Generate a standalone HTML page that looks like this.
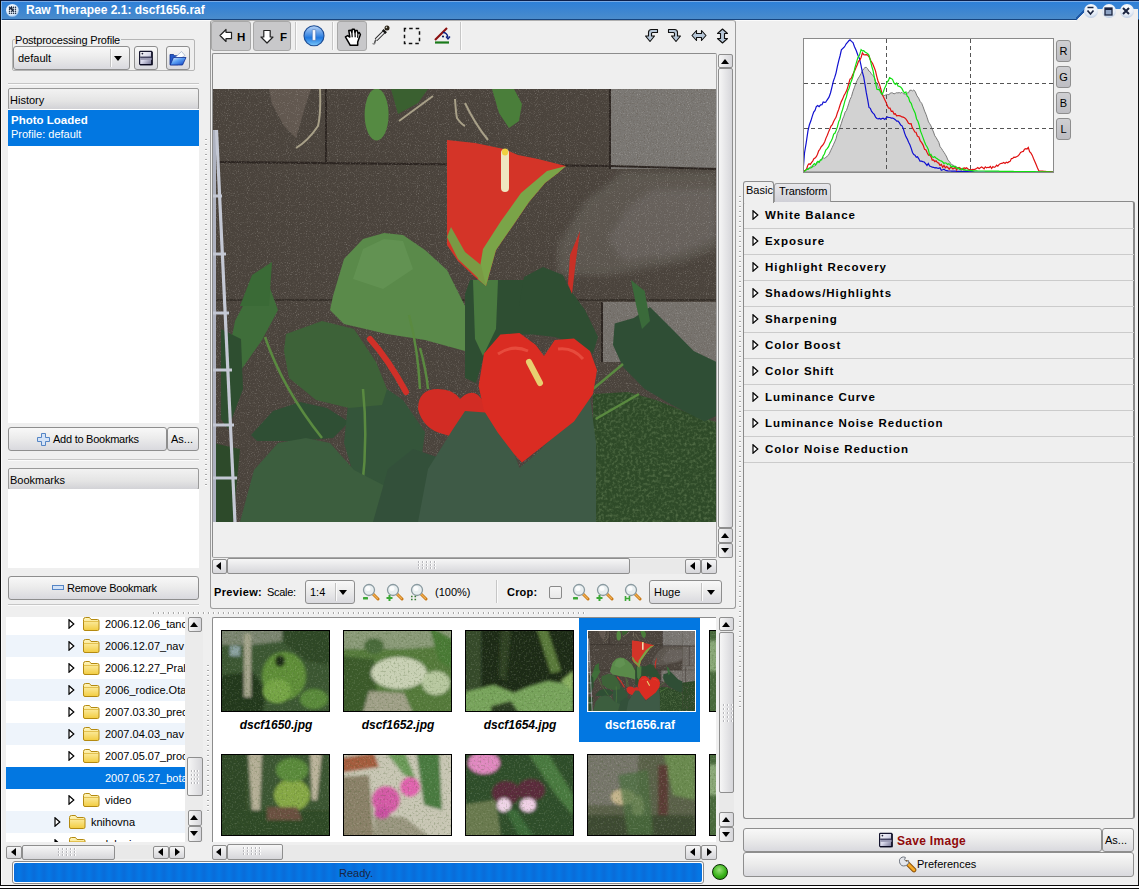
<!DOCTYPE html><html><head><meta charset="utf-8"><style>
*{box-sizing:border-box;margin:0;padding:0}
html,body{width:1139px;height:889px;overflow:hidden;background:#efefef;font-family:"Liberation Sans",sans-serif;font-size:11px;color:#000}
.a{position:absolute}
.t{position:absolute;white-space:nowrap;line-height:1}
.btn{position:absolute;border:1px solid #8e8e8e;border-radius:3px;background:linear-gradient(#f8f8f8,#ececec 45%,#d9d9de)}
.hdr{position:absolute;border:1px solid #9a9a9a;border-radius:2px;background:linear-gradient(#f2f2f2,#e4e4e4 60%,#d2d2d6)}
.sbv{position:absolute;border:1px solid #8e8e8e;border-radius:2px;background:linear-gradient(90deg,#f6f6f6,#e6e6e8 50%,#d6d6da)}
.sbh{position:absolute;border:1px solid #8e8e8e;border-radius:2px;background:linear-gradient(#f6f6f6,#e6e6e8 50%,#d6d6da)}
.trk{position:absolute;background:#e9e9e9}
.tu{position:absolute;width:0;height:0;border-left:5px solid transparent;border-right:5px solid transparent;border-bottom:5px solid #000}
.td{position:absolute;width:0;height:0;border-left:5px solid transparent;border-right:5px solid transparent;border-top:5px solid #000}
.tl{position:absolute;width:0;height:0;border-top:5px solid transparent;border-bottom:5px solid transparent;border-right:5px solid #000}
.tr{position:absolute;width:0;height:0;border-top:5px solid transparent;border-bottom:5px solid transparent;border-left:5px solid #000}
.sep{position:absolute;height:2px;border-top:1px solid #c6c6c6;border-bottom:1px solid #fbfbfb}
.vsep{position:absolute;width:2px;border-left:1px solid #c6c6c6;border-right:1px solid #fbfbfb}
.dotv{position:absolute;width:3px;background-image:linear-gradient(#a8a8a8,#a8a8a8);background-size:1px 1px;background-repeat:no-repeat}
.tool{position:absolute;left:744px;width:390px;height:26px;border-bottom:1px solid #cbcbcb}
.tool .t{left:21px;top:7px;font-weight:bold;font-size:11.5px;letter-spacing:0.95px}
.thumb{position:absolute;width:109px;height:82px;border:1px solid #000;overflow:hidden}
.lbl{position:absolute;font-weight:bold;font-style:italic;font-size:12px;white-space:nowrap;line-height:1;text-align:center;width:122px}
</style></head><body>
<div class="a" style="left:0;top:0;width:1px;height:889px;background:#111"></div><div class="a" style="left:1px;top:20px;width:1px;height:866px;background:#fafafa"></div>
<div class="a" style="left:1138px;top:0;width:1px;height:889px;background:#111"></div>
<div class="a" style="left:0;top:0;width:1139px;height:20px;background:linear-gradient(#0b1e4a 0,#0b1e4a 1px,#7aaae4 1px,#7aaae4 2px,#2e80d8 2px,#3a84d2 9px,#4a8ccc 19px,#17457f 19px,#17457f 20px)"></div>
<svg class="a" style="left:0;top:0" width="24" height="20" viewBox="0 0 24 20"><defs><radialGradient id="wic" cx=".45" cy=".4" r=".6"><stop offset="0" stop-color="#fff"/><stop offset=".7" stop-color="#e4f0fc"/><stop offset="1" stop-color="#9cc4ee"/></radialGradient></defs><path d="M1.5 1.5V20" stroke="#7ab0ec" stroke-width="1"/><circle cx="12.4" cy="10.4" r="6.4" fill="url(#wic)"/><circle cx="9.5" cy="7.3" r=".75" fill="#14243c"/><circle cx="9.5" cy="9.3" r=".75" fill="#14243c"/><circle cx="9.5" cy="11.3" r=".75" fill="#14243c"/><circle cx="9.5" cy="13.3" r=".75" fill="#14243c"/><circle cx="11.5" cy="7.3" r=".75" fill="#14243c"/><circle cx="11.5" cy="9.3" r=".75" fill="#14243c"/><circle cx="11.5" cy="11.3" r=".75" fill="#14243c"/><circle cx="11.5" cy="13.3" r=".75" fill="#14243c"/><circle cx="13.5" cy="7.3" r=".75" fill="#14243c"/><circle cx="13.5" cy="9.3" r=".75" fill="#14243c"/><circle cx="13.5" cy="11.3" r=".75" fill="#14243c"/><circle cx="13.5" cy="13.3" r=".75" fill="#14243c"/><circle cx="15.5" cy="7.3" r=".75" fill="#14243c"/><circle cx="15.5" cy="9.3" r=".75" fill="#14243c"/><circle cx="15.5" cy="11.3" r=".75" fill="#14243c"/><circle cx="15.5" cy="13.3" r=".75" fill="#14243c"/><path d="M9.5 9.3L11.5 7.3L12.5 10.5L13.5 11.3" stroke="#14243c" stroke-width="1.3" fill="none"/></svg>
<div class="t" style="left:26px;top:4px;color:#fff;font-weight:bold;font-size:12px">Raw Therapee 2.1: dscf1656.raf</div>
<div class="a" style="left:0;top:20px;width:1076px;height:1px;background:#fbfbfb"></div>
<div class="a" style="left:1076px;top:9px;width:62px;height:12px;background:#efefef;clip-path:polygon(9px 0,62px 0,62px 12px,0 12px)"></div>
<div class="a" style="left:1076px;top:9px;width:10px;height:11px;background:linear-gradient(to top left,transparent 45%,#1f5aa8 45%,#1f5aa8 60%,transparent 60%)"></div>
<div class="a" style="left:1083.5px;top:4px;width:14px;height:14px;border-radius:50%;background:radial-gradient(circle at 50% 30%,#ffffff,#e6edf7 55%,#9fb6d6)"></div>
<div class="a" style="left:1101.5px;top:4px;width:14px;height:14px;border-radius:50%;background:radial-gradient(circle at 50% 30%,#ffffff,#e6edf7 55%,#9fb6d6)"></div>
<div class="a" style="left:1119.5px;top:4px;width:14px;height:14px;border-radius:50%;background:radial-gradient(circle at 50% 30%,#ffffff,#e6edf7 55%,#9fb6d6)"></div>
<svg class="a" style="left:1083px;top:4px" width="52" height="14" viewBox="0 0 52 14">
<path d="M4.5 3.5h6M4.5 6.5l3 3.5 3-3.5" stroke="#1a2440" stroke-width="1.7" fill="none"/>
<rect x="22" y="4" width="7" height="7" fill="#8ea3c4" stroke="#1a2440" stroke-width="1.3"/><rect x="22" y="4" width="7" height="2" fill="#1a2440"/>
<path d="M40 4l6 6M46 4l-6 6" stroke="#1a2440" stroke-width="2"/>
</svg>
<div class="a" style="left:0;top:0;width:1px;height:889px;background:#0a0a0a"></div>
<div class="a" style="left:0;top:885px;width:1139px;height:1px;background:#0a0a0a"></div>
<div class="a" style="left:0;top:886px;width:1139px;height:2px;background:#fdfdfd"></div>
<div class="a" style="left:0;top:888px;width:1139px;height:1px;background:#0a0a0a"></div>
<svg width="0" height="0" style="position:absolute"><defs>
<radialGradient id="ledg" cx=".4" cy=".35" r=".7"><stop offset="0" stop-color="#a6e886"/><stop offset=".6" stop-color="#3cb21c"/><stop offset="1" stop-color="#1f7a0a"/></radialGradient>
<linearGradient id="wallg" x1="0" y1="0" x2="1" y2="0"><stop offset="0" stop-color="#4a4039" stop-opacity="0"/><stop offset=".35" stop-color="#6e6760"/><stop offset="1" stop-color="#8e8984"/></linearGradient>
<filter id="blur1"><feGaussianBlur stdDeviation="1.2"/></filter>
<filter id="blur2"><feGaussianBlur stdDeviation="3"/></filter>

<filter id="noise" x="0" y="0" width="100%" height="100%"><feTurbulence type="fractalNoise" baseFrequency="0.9" numOctaves="1" seed="3"/><feColorMatrix values="0 0 0 0 0.9  0 0 0 0 0.88  0 0 0 0 0.85  0 0 0 2.2 -1.25"/></filter>
<filter id="noised" x="0" y="0" width="100%" height="100%"><feTurbulence type="fractalNoise" baseFrequency="0.7" numOctaves="2" seed="9"/><feColorMatrix values="0 0 0 0 0.12  0 0 0 0 0.1  0 0 0 0 0.08  0 0 0 2.4 -1.2"/></filter>
<filter id="noise2" x="0" y="0" width="100%" height="100%"><feTurbulence type="fractalNoise" baseFrequency="0.35" numOctaves="2" seed="7"/><feColorMatrix values="0 0 0 0 0.38  0 0 0 0 0.52  0 0 0 0 0.26  0 0 0 1.6 -0.7"/></filter>
<clipPath id="fernclip"><path d="M380 305L415 303L443 311L483 327L503 333V433H380z"/></clipPath>
<g id="photo">

<rect width="575" height="433" fill="#4a433c"/>
<rect x="503" y="0" width="72" height="80" fill="#7b7874"/><rect x="503" y="83" width="72" height="105" fill="#6e6964"/><rect x="503" y="190" width="72" height="90" fill="#75716c"/><path d="M503 280L575 270V433H503z" fill="#2e4a28"/><path d="M540 83V188M520 190V280" stroke="#2b2420" stroke-width="2"/>
<!-- light patch top-left -->
<path d="M56 0H98L93 15L83 49L71 37L59 15z" fill="#625850"/>
<!-- right blocks -->
<rect x="397" y="0" width="106" height="80" fill="#7b7874"/>
<path d="M408 83H503V160L472 172L398 186H345V156L374 110L398 93z" fill="#5c5650" filter="url(#blur2)"/>
<path d="M440 100H503V150L465 165L410 172L395 150L415 118z" fill="#67625d" filter="url(#blur2)"/>
<rect x="389" y="213" width="114" height="60" fill="#77736e"/>
<!-- mortar -->
<path d="M0 73L397 77L575 82" stroke="#2b2420" stroke-width="2.2" fill="none"/>
<path d="M113 0V73M397 0V80M389 213V273" stroke="#2b2420" stroke-width="2"/>
<path d="M0 211H575" stroke="#2f2823" stroke-width="1.6"/>
<rect width="575" height="433" filter="url(#noised)" opacity=".6"/><rect width="575" height="433" filter="url(#noise)" opacity=".4"/>
<!-- stems top -->
<path d="M107 0Q108 25 105 37Q95 52 83 59M220 7L186 32M242 10Q243 25 244 29Q248 35 252 37M252 14Q262 35 275 51" stroke="#a8a088" stroke-width="2" fill="none"/>
<!-- top leaves -->
<ellipse cx="163.6" cy="25.6" rx="12" ry="26" fill="#558a42"/>
<path d="M178 0H215L205 14L185 25z" fill="#3a6030"/>
<path d="M279 0H301L309 15L306 32L296 39L286 24z" fill="#4a7e3a"/>
<!-- fern bottom right -->
<path d="M380 305L415 303L443 311L483 327L503 333V433H380z" fill="#2e4a28"/>
<g clip-path="url(#fernclip)"><rect x="380" y="300" width="123" height="133" filter="url(#noise2)" opacity=".45"/></g>
<!-- far left leaves -->
<path d="M54 191L65 221L49 251L19 294L14 273L22 232L41 196z" fill="#3f6e3a"/>
<path d="M59 173L39 186L27 217L56 217z" fill="#3a6a36"/>
<path d="M8 240L28 250L30 300L15 340L8 330z" fill="#2e4e30"/>
<!-- wall-dark leaf middle left -->
<path d="M38 346L60 322L87 313L114 319L136 333L120 349L82 352L44 352z" fill="#2f4f34"/>
<!-- dark leaf behind center -->
<path d="M136 305L174 300L190 311L212 343L207 381L185 409L163 420L141 387L131 354z" fill="#34553a"/>
<!-- big leaf center-left -->
<path d="M73 245L109 232L141 240L163 273L174 300L169 316L136 319L103 311L76 289L71 262z" fill="#3d6238"/>
<!-- light big leaf -->
<path d="M120 207L131 170L150 150L171 144L190 146L212 161L234 181L247 207L252 217L252 262L212 251L174 245L131 235L117 221z" fill="#5a8a4a"/>
<path d="M150 160L171 150L190 152L200 180L170 200L140 190z" fill="#659655" opacity=".7"/>
<!-- dark leaf top behind heart -->
<path d="M257 191L350 191L372 221L385 248L380 264.5L366 256L342 248L320 245.5L293 245.5L271 267L263 294L252 289L252 205z" fill="#2e4e32"/>
<path d="M306 217L311 188L330 178L350 186L364 217z" fill="#2e4e32"/>
<path d="M260 191L285 191L283 240L270 267L262 250z" fill="#4a7a40"/>
<!-- right leaf -->
<path d="M401.7 234.6L420.8 229L437 218L459 240L480.7 262L503 272.7V327L491.6 332.6L459 316L431.7 300L410 278L400 256z" fill="#2f4e35"/>
<path d="M418 191L431.7 202L437 232L429 240L423.5 218z" fill="#3a6a3a"/>
<!-- stems -->
<path d="M52 248Q70 300 109 349M196 226Q205 260 207 300M207 259Q213 280 215 300M382.7 330L426 305M380 300L410 275M149 400Q155 350 150 300" stroke="#5a8a40" stroke-width="2.5" fill="none"/>
<!-- lower-left big leaves -->
<path d="M27 433L41 381L65 354L93 349L117 354L141 381L174 398L163 433z" fill="#3c5e3e"/>
<path d="M0 354L27 360L20 433H0z" fill="#2d4a2a"/>
<path d="M160 433L175 380L200 360L230 370L252 410L252 433z" fill="#33503a"/>
<!-- small heart left -->
<path d="M205 320Q205 300 225 300Q240 300 247 310Q257 300 265 306Q280 320 290 370L280 376Q250 350 230 345Q210 340 205 320z" fill="#d22c24"/>
<!-- bottom big leaf under heart -->
<path d="M252 322L279 324L293 343.5L306.5 379L323 365L347 341L377 308L383 354L383 433H205L215 380L240 340z" fill="#3e5a46"/>
<!-- ladder -->
<path d="M1.5 41V433" stroke="#aeb2c0" stroke-width="3"/>
<path d="M3.5 41L22 433" stroke="#c4c8d4" stroke-width="3.2"/>
<path d="M0 107H9M0 165H13M0 224H16M0 281H19M0 336H21M0 389H24" stroke="#c4c8d4" stroke-width="3"/>
<!-- top spathe -->
<path d="M234 51L262 54L291 60L305 66L325 70L353 77L345 84L332 94L316 113L301 135L283 161L273 197L262 188L245 172L234 156z" fill="#d43428"/>
<path d="M353 77L345 84L332 94L316 113L301 135L283 161L273 197L265 190L270 160L288 132L308 104L334 82z" fill="#7aa448"/>
<path d="M234 148L245 170L262 186L273 197L268 176L252 163L238 138z" fill="#7a9a44"/>
<path d="M292 64V99" stroke="#efe6c0" stroke-width="8" stroke-linecap="round"/>
<path d="M292 62.5V63.5" stroke="#f0d040" stroke-width="6" stroke-linecap="round"/>
<!-- buds -->
<path d="M157 250Q175 270 193 303" stroke="#d03028" stroke-width="6" stroke-linecap="round" fill="none"/>
<path d="M367 142L363 171L359 205L355 195L357 166z" fill="#c83026"/>
<!-- big heart -->
<path d="M265.6 297L271 264.5L287.4 245.5L306.5 244L322.8 256L331 267L341.8 251L361 249.5L377 262L384 281L380 305L361 332.6L333.7 354L309 373.4L301 365L284.7 343.5L271 321.7z" fill="#da2c22"/>
<path d="M285 265Q300 255 315 262M345 260Q360 258 370 270" stroke="#f06050" stroke-width="3" fill="none" opacity=".6"/>
<path d="M316 273L327 294" stroke="#e8d070" stroke-width="6" stroke-linecap="round"/>

</g>
<filter id="tb" x="-5%" y="-5%" width="110%" height="110%"><feGaussianBlur stdDeviation="1.6"/></filter>
<filter id="tnoise" x="0" y="0" width="100%" height="100%"><feTurbulence type="fractalNoise" baseFrequency="0.6" numOctaves="1" seed="11"/><feColorMatrix values="0 0 0 0 0.9  0 0 0 0 0.95  0 0 0 0 0.8  0 0 0 1.8 -0.95"/></filter>
<filter id="tnoised" x="0" y="0" width="100%" height="100%"><feTurbulence type="fractalNoise" baseFrequency="0.5" numOctaves="1" seed="5"/><feColorMatrix values="0 0 0 0 0.05  0 0 0 0 0.1  0 0 0 0 0.02  0 0 0 1.8 -0.9"/></filter>
<g id="t1"><rect width="107" height="80" fill="#3a5630"/><g filter="url(#tb)">
<rect x="-5" y="-5" width="117" height="90" fill="#3a5630"/>
<path d="M-5 -5H60V10L30 14H-5z" fill="#7a8470"/>
<path d="M60 -5H112V35L85 30L62 12z" fill="#2e4626"/>
<path d="M-5 45L30 40L45 60L40 85H-5z" fill="#24381e"/>
<ellipse cx="62" cy="45" rx="22" ry="24" fill="#5e8e38"/>
<ellipse cx="55" cy="60" rx="14" ry="12" fill="#74a444"/>
<ellipse cx="92" cy="68" rx="14" ry="10" fill="#5a8a3a"/>
<path d="M22 3H29V66H22z" fill="#a4a48c"/>
<path d="M8 15H18V25H8z" fill="#8aa0a0"/>
<ellipse cx="58" cy="30" rx="5" ry="6" fill="#1e2c18"/>
</g><rect width="107" height="80" filter="url(#tnoise)" opacity=".35"/><rect width="107" height="80" filter="url(#tnoised)" opacity=".5"/></g>
<g id="t2"><rect width="107" height="80" fill="#557a3a"/><g filter="url(#tb)">
<rect x="-5" y="-5" width="117" height="90" fill="#557a3a"/>
<path d="M-5 -5H112V14L60 18H-5z" fill="#8a9a78"/>
<path d="M-5 25L30 28L35 85H-5z" fill="#3a5a2c"/>
<ellipse cx="55" cy="42" rx="28" ry="16" fill="#c8d0b4"/>
<ellipse cx="92" cy="52" rx="14" ry="12" fill="#b8c8a0"/>
<path d="M18 85L25 60L60 62L70 85z" fill="#a0a088"/>
<path d="M85 -5L112 10V40L95 30z" fill="#4a7a34"/>
<ellipse cx="30" cy="15" rx="10" ry="8" fill="#4a6a3a"/>
</g><rect width="107" height="80" filter="url(#tnoise)" opacity=".35"/><rect width="107" height="80" filter="url(#tnoised)" opacity=".5"/></g>
<g id="t3"><rect width="107" height="80" fill="#1e2c16"/><g filter="url(#tb)">
<rect x="-5" y="-5" width="117" height="90" fill="#1e2c16"/>
<path d="M-5 -5H15V60H-5z" fill="#34482a"/>
<path d="M70 -5L80 -5L95 40L85 42z" fill="#5a7a3a"/>
<path d="M35 -5L45 -5L40 50L33 45z" fill="#2e4024"/>
<path d="M-5 62L28 54L48 62L62 56L82 50L107 54V85H-5z" fill="#78a45c"/>
<path d="M25 75L45 70L55 85H25z" fill="#2a3a20"/>
<path d="M95 50L107 40V60z" fill="#8ab060"/>
</g><rect width="107" height="80" filter="url(#tnoise)" opacity=".35"/><rect width="107" height="80" filter="url(#tnoised)" opacity=".5"/></g>
<g id="t4"><svg width="107" height="80" viewBox="0 0 570 433" preserveAspectRatio="none"><use href="#photo"/></svg></g>
<g id="t5"><rect width="107" height="80" fill="#4a6a3c"/><g filter="url(#tb)"><rect x="-5" y="-5" width="117" height="90" fill="#4a6a3c"/><path d="M-5 10H20V40H-5z" fill="#8aa878"/></g><rect width="107" height="80" filter="url(#tnoise)" opacity=".35"/><rect width="107" height="80" filter="url(#tnoised)" opacity=".5"/></g>
<g id="t6"><rect width="107" height="80" fill="#3a5530"/><g filter="url(#tb)">
<rect x="-5" y="-5" width="117" height="90" fill="#3a5530"/>
<path d="M-5 -5H25V55H-5z" fill="#2e4626"/>
<ellipse cx="70" cy="40" rx="18" ry="16" fill="#86a844"/>
<ellipse cx="70" cy="15" rx="16" ry="12" fill="#5a8a3a"/>
<path d="M-5 55H112V85H-5z" fill="#2e4828"/>
<path d="M45 52H75L80 65H45z" fill="#6a5040"/>
<path d="M26 -5H40L38 55H30z" fill="#b4ae96"/>
<path d="M88 -5H100L95 45H90z" fill="#bcb49c"/>
</g><rect width="107" height="80" filter="url(#tnoise)" opacity=".35"/><rect width="107" height="80" filter="url(#tnoised)" opacity=".5"/></g>
<g id="t7"><rect width="107" height="80" fill="#c8c6b4"/><g filter="url(#tb)">
<rect x="-5" y="-5" width="117" height="90" fill="#c8c6b4"/>
<path d="M-5 3L30 -2L35 12L-5 18z" fill="#a45c3c"/>
<path d="M-5 22L25 20L30 85H-5z" fill="#8a8068"/>
<path d="M72 -5H95L98 55L80 50z" fill="#4a7a40"/>
<path d="M40 -5L60 -5L72 25L60 20z" fill="#6a9a58"/>
<path d="M30 60L60 62L90 85H30z" fill="#9a9680"/>
<ellipse cx="42" cy="45" rx="14" ry="14" fill="#d45aa6"/>
<ellipse cx="66" cy="32" rx="10" ry="10" fill="#e062ae"/>
<ellipse cx="38" cy="58" rx="8" ry="6" fill="#c850a0"/>
</g><rect width="107" height="80" filter="url(#tnoise)" opacity=".35"/><rect width="107" height="80" filter="url(#tnoised)" opacity=".5"/></g>
<g id="t8"><rect width="107" height="80" fill="#2f4e2a"/><g filter="url(#tb)">
<rect x="-5" y="-5" width="117" height="90" fill="#2f4e2a"/>
<ellipse cx="18" cy="8" rx="16" ry="11" fill="#e088c0"/>
<path d="M60 -5L80 -5L107 40V60L90 40z" fill="#4a7a40"/>
<path d="M-5 50L30 45L35 85H-5z" fill="#6a7a50"/>
<ellipse cx="40" cy="38" rx="14" ry="12" fill="#5a2c3a"/>
<ellipse cx="65" cy="35" rx="14" ry="11" fill="#5a2c3a"/>
<ellipse cx="38" cy="50" rx="7" ry="7" fill="#f0d4e8"/>
<ellipse cx="62" cy="50" rx="8" ry="7" fill="#f0d0e6"/>
<path d="M40 55L55 85H70L50 55z" fill="#3a6a38"/>
</g><rect width="107" height="80" filter="url(#tnoise)" opacity=".35"/><rect width="107" height="80" filter="url(#tnoised)" opacity=".5"/></g>
<g id="t9"><rect width="107" height="80" fill="#5a6048"/><g filter="url(#tb)">
<rect x="-5" y="-5" width="117" height="90" fill="#5a6048"/>
<path d="M-5 -5H50V40L30 50H-5z" fill="#76746a"/>
<path d="M75 -5H107V45L85 40z" fill="#6a8a50"/>
<path d="M70 10H80V60H70z" fill="#5a3a34"/>
<ellipse cx="35" cy="42" rx="12" ry="8" fill="#c4b48c"/>
<ellipse cx="50" cy="52" rx="6" ry="12" fill="#b0a880"/>
<path d="M-5 60H107V85H-5z" fill="#3e4a30"/>
<path d="M30 20L60 15L65 80L40 80z" fill="#4a7040" opacity=".7"/>
</g><rect width="107" height="80" filter="url(#tnoise)" opacity=".35"/><rect width="107" height="80" filter="url(#tnoised)" opacity=".5"/></g>
</defs></svg>
<div class="a" style="left:12px;top:39px;width:183px;height:32px;border:1px solid #b5b5b5;border-radius:2px"></div>
<div class="t" style="left:15px;top:35px;background:#efefef;padding:0 1px 0 0;letter-spacing:-0.2px">Postprocessing Profile</div>
<div class="btn" style="left:13px;top:46px;width:117px;height:24px"></div>
<div class="a" style="left:110px;top:49px;width:2px;height:18px;border-left:1px solid #c2c2c2;border-right:1px solid #fbfbfb"></div>
<div class="td" style="left:114px;top:56px;border-width:5px 4.5px 0 4.5px"></div>
<div class="t" style="left:18px;top:53px">default</div>
<div class="btn" style="left:134px;top:46px;width:24px;height:24px"></div>
<div class="btn" style="left:166px;top:46px;width:24px;height:24px"></div>
<svg class="a" style="left:138px;top:50px" width="16" height="16" viewBox="0 0 16 16"><defs><linearGradient id="fdv" x1="0" y1="0" x2="1" y2="1"><stop offset="0" stop-color="#ffffff"/><stop offset=".5" stop-color="#d8d8ea"/><stop offset="1" stop-color="#6a6a8c"/></linearGradient></defs><rect x="1.6" y="1.4" width="12.4" height="13.2" rx=".8" fill="url(#fdv)" stroke="#14142e" stroke-width="1.2"/><path d="M14 2v12.6H2" stroke="#0a0a20" stroke-width="1.4" fill="none"/><rect x="2.2" y="6.6" width="11.4" height="1.3" fill="#2a2a4a"/><rect x="2.2" y="7.9" width="11.4" height="2" fill="#9a9ab4"/><circle cx="4.4" cy="3.6" r=".9" fill="#20203a"/></svg>
<svg class="a" style="left:169px;top:50px" width="18" height="16" viewBox="0 0 18 16"><defs><linearGradient id="ofg" x1="0" y1="0" x2="1" y2="1"><stop offset="0" stop-color="#e8f4ff"/><stop offset=".45" stop-color="#5aa0f4"/><stop offset="1" stop-color="#0c3cc0"/></linearGradient></defs><path d="M1 4.5h3.5l1 1.2H9v9H1z" fill="#2458c8" stroke="#10308a" stroke-width=".8"/><path d="M4 9.5L12.5 1.5L16 5.5L9 10z" fill="#fbfdff" stroke="#8aa0c0" stroke-width=".6"/><path d="M1.2 15L4.5 7.5H17L13.5 15z" fill="url(#ofg)" stroke="#0c2c90" stroke-width=".8"/></svg>
<div class="sep" style="left:8px;top:83px;width:191px"></div>
<div class="hdr" style="left:8px;top:88px;width:191px;height:22px"></div>
<div class="t" style="left:10px;top:95px">History</div>
<div class="a" style="left:8px;top:109px;width:191px;height:314px;background:#fff"></div>
<div class="a" style="left:8px;top:110px;width:191px;height:36px;background:#0277e1"></div>
<div class="t" style="left:11px;top:115px;color:#fff;font-weight:bold;font-size:11.5px">Photo Loaded</div>
<div class="t" style="left:11px;top:129px;color:#fff">Profile: default</div>
<div class="btn" style="left:8px;top:427px;width:159px;height:24px"></div>
<div class="btn" style="left:167px;top:427px;width:32px;height:24px"></div>
<svg class="a" style="left:37px;top:433px" width="13" height="13" viewBox="0 0 13 13"><path d="M4.5 .5h4v4h4v4h-4v4h-4v-4h-4v-4h4z" fill="#d4e3f7" stroke="#5585c5"/></svg>
<div class="t" style="left:53px;top:434px;letter-spacing:-0.25px">Add to Bookmarks</div>
<div class="t" style="left:171px;top:434px">As...</div>
<div class="sep" style="left:8px;top:459px;width:191px"></div>
<div class="hdr" style="left:8px;top:468px;width:191px;height:22px"></div>
<div class="t" style="left:10px;top:475px">Bookmarks</div>
<div class="a" style="left:8px;top:489px;width:191px;height:79px;background:#fff"></div>
<div class="btn" style="left:8px;top:576px;width:191px;height:24px"></div>
<svg class="a" style="left:52px;top:585px" width="12" height="6" viewBox="0 0 12 6"><rect x=".5" y=".5" width="11" height="4" fill="#d4e3f7" stroke="#5585c5"/></svg>
<div class="t" style="left:67px;top:583px;letter-spacing:-0.25px">Remove Bookmark</div>
<div class="sep" style="left:8px;top:604px;width:191px"></div>
<div class="a" style="left:205px;top:136px;width:2px;height:351px;background:repeating-linear-gradient(#efefef 0,#efefef 3px,#a9a9a9 3px,#a9a9a9 4px,#ffffff 4px,#ffffff 5px)"></div>
<div class="a" style="left:150px;top:612px;width:437px;height:2px;background:repeating-linear-gradient(90deg,#efefef 0,#efefef 3px,#a9a9a9 3px,#a9a9a9 4px,#ffffff 4px,#ffffff 5px)"></div>
<div class="a" style="left:6px;top:617px;width:179px;height:225px;background:#fff;overflow:hidden">
<div class="a" style="left:0;top:-4px;width:179px;height:22px;background:#ffffff"></div>
<svg class="a" style="left:62px;top:2px" width="7" height="10" viewBox="0 0 7 10"><path d="M1 .8l4.8 4.2L1 9.2z" fill="#fff" stroke="#000" stroke-width="1.2"/></svg>
<svg class="a" style="left:76px;top:-1px" width="18" height="15" viewBox="0 0 18 15"><defs><linearGradient id="fg0" x1="0" y1="0" x2="0" y2="1"><stop offset="0" stop-color="#fff6c0"/><stop offset="1" stop-color="#f2cc40"/></linearGradient></defs><path d="M1.5 3.5q0-2 2-2h4l1.5 2h6.5q1.5 0 1.5 1.5v8q0 1.5-1.5 1.5h-12.5q-1.5 0-1.5-1.5z" fill="url(#fg0)" stroke="#b48a10"/><path d="M1.5 5.5h15.5" stroke="#d8b030" stroke-width=".7"/></svg>
<div class="t" style="left:99px;top:2px;color:#000">2006.12.06_tanc</div>
<div class="a" style="left:0;top:18px;width:179px;height:22px;background:#eef4fb"></div>
<svg class="a" style="left:62px;top:24px" width="7" height="10" viewBox="0 0 7 10"><path d="M1 .8l4.8 4.2L1 9.2z" fill="#fff" stroke="#000" stroke-width="1.2"/></svg>
<svg class="a" style="left:76px;top:21px" width="18" height="15" viewBox="0 0 18 15"><defs><linearGradient id="fg1" x1="0" y1="0" x2="0" y2="1"><stop offset="0" stop-color="#fff6c0"/><stop offset="1" stop-color="#f2cc40"/></linearGradient></defs><path d="M1.5 3.5q0-2 2-2h4l1.5 2h6.5q1.5 0 1.5 1.5v8q0 1.5-1.5 1.5h-12.5q-1.5 0-1.5-1.5z" fill="url(#fg1)" stroke="#b48a10"/><path d="M1.5 5.5h15.5" stroke="#d8b030" stroke-width=".7"/></svg>
<div class="t" style="left:99px;top:24px;color:#000">2006.12.07_nav</div>
<div class="a" style="left:0;top:40px;width:179px;height:22px;background:#ffffff"></div>
<svg class="a" style="left:62px;top:46px" width="7" height="10" viewBox="0 0 7 10"><path d="M1 .8l4.8 4.2L1 9.2z" fill="#fff" stroke="#000" stroke-width="1.2"/></svg>
<svg class="a" style="left:76px;top:43px" width="18" height="15" viewBox="0 0 18 15"><defs><linearGradient id="fg2" x1="0" y1="0" x2="0" y2="1"><stop offset="0" stop-color="#fff6c0"/><stop offset="1" stop-color="#f2cc40"/></linearGradient></defs><path d="M1.5 3.5q0-2 2-2h4l1.5 2h6.5q1.5 0 1.5 1.5v8q0 1.5-1.5 1.5h-12.5q-1.5 0-1.5-1.5z" fill="url(#fg2)" stroke="#b48a10"/><path d="M1.5 5.5h15.5" stroke="#d8b030" stroke-width=".7"/></svg>
<div class="t" style="left:99px;top:46px;color:#000">2006.12.27_Prah</div>
<div class="a" style="left:0;top:62px;width:179px;height:22px;background:#eef4fb"></div>
<svg class="a" style="left:62px;top:68px" width="7" height="10" viewBox="0 0 7 10"><path d="M1 .8l4.8 4.2L1 9.2z" fill="#fff" stroke="#000" stroke-width="1.2"/></svg>
<svg class="a" style="left:76px;top:65px" width="18" height="15" viewBox="0 0 18 15"><defs><linearGradient id="fg3" x1="0" y1="0" x2="0" y2="1"><stop offset="0" stop-color="#fff6c0"/><stop offset="1" stop-color="#f2cc40"/></linearGradient></defs><path d="M1.5 3.5q0-2 2-2h4l1.5 2h6.5q1.5 0 1.5 1.5v8q0 1.5-1.5 1.5h-12.5q-1.5 0-1.5-1.5z" fill="url(#fg3)" stroke="#b48a10"/><path d="M1.5 5.5h15.5" stroke="#d8b030" stroke-width=".7"/></svg>
<div class="t" style="left:99px;top:68px;color:#000">2006_rodice.Ota</div>
<div class="a" style="left:0;top:84px;width:179px;height:22px;background:#ffffff"></div>
<svg class="a" style="left:62px;top:90px" width="7" height="10" viewBox="0 0 7 10"><path d="M1 .8l4.8 4.2L1 9.2z" fill="#fff" stroke="#000" stroke-width="1.2"/></svg>
<svg class="a" style="left:76px;top:87px" width="18" height="15" viewBox="0 0 18 15"><defs><linearGradient id="fg4" x1="0" y1="0" x2="0" y2="1"><stop offset="0" stop-color="#fff6c0"/><stop offset="1" stop-color="#f2cc40"/></linearGradient></defs><path d="M1.5 3.5q0-2 2-2h4l1.5 2h6.5q1.5 0 1.5 1.5v8q0 1.5-1.5 1.5h-12.5q-1.5 0-1.5-1.5z" fill="url(#fg4)" stroke="#b48a10"/><path d="M1.5 5.5h15.5" stroke="#d8b030" stroke-width=".7"/></svg>
<div class="t" style="left:99px;top:90px;color:#000">2007.03.30_pred</div>
<div class="a" style="left:0;top:106px;width:179px;height:22px;background:#eef4fb"></div>
<svg class="a" style="left:62px;top:112px" width="7" height="10" viewBox="0 0 7 10"><path d="M1 .8l4.8 4.2L1 9.2z" fill="#fff" stroke="#000" stroke-width="1.2"/></svg>
<svg class="a" style="left:76px;top:109px" width="18" height="15" viewBox="0 0 18 15"><defs><linearGradient id="fg5" x1="0" y1="0" x2="0" y2="1"><stop offset="0" stop-color="#fff6c0"/><stop offset="1" stop-color="#f2cc40"/></linearGradient></defs><path d="M1.5 3.5q0-2 2-2h4l1.5 2h6.5q1.5 0 1.5 1.5v8q0 1.5-1.5 1.5h-12.5q-1.5 0-1.5-1.5z" fill="url(#fg5)" stroke="#b48a10"/><path d="M1.5 5.5h15.5" stroke="#d8b030" stroke-width=".7"/></svg>
<div class="t" style="left:99px;top:112px;color:#000">2007.04.03_nav</div>
<div class="a" style="left:0;top:128px;width:179px;height:22px;background:#ffffff"></div>
<svg class="a" style="left:62px;top:134px" width="7" height="10" viewBox="0 0 7 10"><path d="M1 .8l4.8 4.2L1 9.2z" fill="#fff" stroke="#000" stroke-width="1.2"/></svg>
<svg class="a" style="left:76px;top:131px" width="18" height="15" viewBox="0 0 18 15"><defs><linearGradient id="fg6" x1="0" y1="0" x2="0" y2="1"><stop offset="0" stop-color="#fff6c0"/><stop offset="1" stop-color="#f2cc40"/></linearGradient></defs><path d="M1.5 3.5q0-2 2-2h4l1.5 2h6.5q1.5 0 1.5 1.5v8q0 1.5-1.5 1.5h-12.5q-1.5 0-1.5-1.5z" fill="url(#fg6)" stroke="#b48a10"/><path d="M1.5 5.5h15.5" stroke="#d8b030" stroke-width=".7"/></svg>
<div class="t" style="left:99px;top:134px;color:#000">2007.05.07_proc</div>
<div class="a" style="left:0;top:150px;width:179px;height:22px;background:#0277e1"></div>
<div class="t" style="left:99px;top:156px;color:#fff">2007.05.27_bota</div>
<div class="a" style="left:0;top:172px;width:179px;height:22px;background:#ffffff"></div>
<svg class="a" style="left:62px;top:178px" width="7" height="10" viewBox="0 0 7 10"><path d="M1 .8l4.8 4.2L1 9.2z" fill="#fff" stroke="#000" stroke-width="1.2"/></svg>
<svg class="a" style="left:76px;top:175px" width="18" height="15" viewBox="0 0 18 15"><defs><linearGradient id="fg8" x1="0" y1="0" x2="0" y2="1"><stop offset="0" stop-color="#fff6c0"/><stop offset="1" stop-color="#f2cc40"/></linearGradient></defs><path d="M1.5 3.5q0-2 2-2h4l1.5 2h6.5q1.5 0 1.5 1.5v8q0 1.5-1.5 1.5h-12.5q-1.5 0-1.5-1.5z" fill="url(#fg8)" stroke="#b48a10"/><path d="M1.5 5.5h15.5" stroke="#d8b030" stroke-width=".7"/></svg>
<div class="t" style="left:99px;top:178px;color:#000">video</div>
<div class="a" style="left:0;top:194px;width:179px;height:22px;background:#eef4fb"></div>
<svg class="a" style="left:48px;top:200px" width="7" height="10" viewBox="0 0 7 10"><path d="M1 .8l4.8 4.2L1 9.2z" fill="#fff" stroke="#000" stroke-width="1.2"/></svg>
<svg class="a" style="left:62px;top:197px" width="18" height="15" viewBox="0 0 18 15"><defs><linearGradient id="fg9" x1="0" y1="0" x2="0" y2="1"><stop offset="0" stop-color="#fff6c0"/><stop offset="1" stop-color="#f2cc40"/></linearGradient></defs><path d="M1.5 3.5q0-2 2-2h4l1.5 2h6.5q1.5 0 1.5 1.5v8q0 1.5-1.5 1.5h-12.5q-1.5 0-1.5-1.5z" fill="url(#fg9)" stroke="#b48a10"/><path d="M1.5 5.5h15.5" stroke="#d8b030" stroke-width=".7"/></svg>
<div class="t" style="left:85px;top:200px;color:#000">knihovna</div>
<div class="a" style="left:0;top:216px;width:179px;height:22px;background:#ffffff"></div>
<svg class="a" style="left:48px;top:222px" width="7" height="10" viewBox="0 0 7 10"><path d="M1 .8l4.8 4.2L1 9.2z" fill="#fff" stroke="#000" stroke-width="1.2"/></svg>
<svg class="a" style="left:62px;top:219px" width="18" height="15" viewBox="0 0 18 15"><defs><linearGradient id="fg10" x1="0" y1="0" x2="0" y2="1"><stop offset="0" stop-color="#fff6c0"/><stop offset="1" stop-color="#f2cc40"/></linearGradient></defs><path d="M1.5 3.5q0-2 2-2h4l1.5 2h6.5q1.5 0 1.5 1.5v8q0 1.5-1.5 1.5h-12.5q-1.5 0-1.5-1.5z" fill="url(#fg10)" stroke="#b48a10"/><path d="M1.5 5.5h15.5" stroke="#d8b030" stroke-width=".7"/></svg>
<div class="t" style="left:85px;top:222px;color:#000">vzdelani</div>
</div>
<div class="a" style="left:185px;top:617px;width:18px;height:225px;background:#ebebeb"></div>
<div class="sbv" style="left:188px;top:617px;width:14px;height:15px"></div><div class="tu" style="left:190px;top:622px;border-width:0 4.5px 5px 4.5px"></div>
<div class="sbv" style="left:187px;top:757px;width:16px;height:39px"></div>
<div class="a" style="left:191px;top:770px;width:2px;height:2px;background:#b8b8bc;border-right:1px solid #fff"></div><div class="a" style="left:191px;top:774px;width:2px;height:2px;background:#b8b8bc;border-right:1px solid #fff"></div><div class="a" style="left:191px;top:778px;width:2px;height:2px;background:#b8b8bc;border-right:1px solid #fff"></div><div class="a" style="left:191px;top:782px;width:2px;height:2px;background:#b8b8bc;border-right:1px solid #fff"></div><div class="a" style="left:194px;top:770px;width:2px;height:2px;background:#b8b8bc;border-right:1px solid #fff"></div><div class="a" style="left:194px;top:774px;width:2px;height:2px;background:#b8b8bc;border-right:1px solid #fff"></div><div class="a" style="left:194px;top:778px;width:2px;height:2px;background:#b8b8bc;border-right:1px solid #fff"></div><div class="a" style="left:194px;top:782px;width:2px;height:2px;background:#b8b8bc;border-right:1px solid #fff"></div><div class="a" style="left:197px;top:770px;width:2px;height:2px;background:#b8b8bc;border-right:1px solid #fff"></div><div class="a" style="left:197px;top:774px;width:2px;height:2px;background:#b8b8bc;border-right:1px solid #fff"></div><div class="a" style="left:197px;top:778px;width:2px;height:2px;background:#b8b8bc;border-right:1px solid #fff"></div><div class="a" style="left:197px;top:782px;width:2px;height:2px;background:#b8b8bc;border-right:1px solid #fff"></div>
<div class="sbv" style="left:188px;top:810px;width:14px;height:16px"></div><div class="tu" style="left:190px;top:815px;border-width:0 4.5px 5px 4.5px"></div>
<div class="sbv" style="left:188px;top:826px;width:14px;height:16px"></div><div class="td" style="left:190px;top:831px;border-width:5px 4.5px 0 4.5px"></div>
<div class="trk" style="left:6px;top:845px;width:179px;height:14px"></div>
<div class="sbh" style="left:6px;top:846px;width:16px;height:13px"></div><div class="tl" style="left:11px;top:848px;border-width:4.5px 5px 4.5px 0"></div>
<div class="sbh" style="left:22px;top:845px;width:93px;height:15px"></div>
<div class="a" style="left:58px;top:848px;width:2px;height:2px;background:#b8b8bc;border-right:1px solid #fff"></div><div class="a" style="left:58px;top:851px;width:2px;height:2px;background:#b8b8bc;border-right:1px solid #fff"></div><div class="a" style="left:58px;top:854px;width:2px;height:2px;background:#b8b8bc;border-right:1px solid #fff"></div><div class="a" style="left:62px;top:848px;width:2px;height:2px;background:#b8b8bc;border-right:1px solid #fff"></div><div class="a" style="left:62px;top:851px;width:2px;height:2px;background:#b8b8bc;border-right:1px solid #fff"></div><div class="a" style="left:62px;top:854px;width:2px;height:2px;background:#b8b8bc;border-right:1px solid #fff"></div><div class="a" style="left:66px;top:848px;width:2px;height:2px;background:#b8b8bc;border-right:1px solid #fff"></div><div class="a" style="left:66px;top:851px;width:2px;height:2px;background:#b8b8bc;border-right:1px solid #fff"></div><div class="a" style="left:66px;top:854px;width:2px;height:2px;background:#b8b8bc;border-right:1px solid #fff"></div><div class="a" style="left:70px;top:848px;width:2px;height:2px;background:#b8b8bc;border-right:1px solid #fff"></div><div class="a" style="left:70px;top:851px;width:2px;height:2px;background:#b8b8bc;border-right:1px solid #fff"></div><div class="a" style="left:70px;top:854px;width:2px;height:2px;background:#b8b8bc;border-right:1px solid #fff"></div><div class="a" style="left:74px;top:848px;width:2px;height:2px;background:#b8b8bc;border-right:1px solid #fff"></div><div class="a" style="left:74px;top:851px;width:2px;height:2px;background:#b8b8bc;border-right:1px solid #fff"></div><div class="a" style="left:74px;top:854px;width:2px;height:2px;background:#b8b8bc;border-right:1px solid #fff"></div>
<div class="sbh" style="left:153px;top:846px;width:16px;height:13px"></div><div class="tl" style="left:158px;top:848px;border-width:4.5px 5px 4.5px 0"></div>
<div class="sbh" style="left:169px;top:846px;width:16px;height:13px"></div><div class="tr" style="left:175px;top:848px;border-width:4.5px 0 4.5px 5px"></div>
<div class="a" style="left:12px;top:861px;width:692px;height:23px;border:1px solid #8a8a8a;border-radius:3px;background:#fff;padding:1px"><div style="width:100%;height:100%;border-radius:2px;background:repeating-linear-gradient(90deg,#0a6cd9 0,#0478e6 5px,#0a6cd9 10px)"></div></div>
<div class="t" style="left:339px;top:868px;color:#1a2440">Ready.</div>
<div class="a" style="left:712px;top:864px;width:16px;height:16px;border-radius:50%;background:radial-gradient(circle at 45% 35%,#9be27a,#39b21a 55%,#1f7a0a);border:1.5px solid #0a2a05"></div>
<div class="a" style="left:210px;top:20px;width:526px;height:589px;border:1px solid #9c9c9c;border-top-color:#b0b0b0;border-radius:3px"></div>
<div style="position:absolute;border:1px solid #a8a8a8;border-radius:3px;background:#c8c8ca;left:211px;top:21px;width:40px;height:30px"></div>
<div style="position:absolute;border:1px solid #a8a8a8;border-radius:3px;background:#c8c8ca;left:253px;top:21px;width:38px;height:30px"></div>
<div style="position:absolute;border:1px solid #a8a8a8;border-radius:3px;background:#c8c8ca;left:337px;top:21px;width:30px;height:30px"></div>
<div class="vsep" style="left:295px;top:22px;height:28px"></div>
<div class="vsep" style="left:332px;top:22px;height:28px"></div>
<div class="vsep" style="left:460px;top:22px;height:28px"></div>
<svg class="a" style="left:219px;top:28px" width="16" height="16" viewBox="0 0 16 16"><path d="M1 7.5L7 1.5V4.3H12.5V10.7H7V13.5z" fill="#fff" stroke="#222" stroke-width="1.2" stroke-linejoin="round"/></svg>
<div class="t" style="left:237px;top:32px;font-weight:bold;font-size:11.5px">H</div>
<svg class="a" style="left:259px;top:28px" width="16" height="16" viewBox="0 0 16 16"><path d="M8 15L2 9H4.8V2.5H11.2V9H14z" fill="#fff" stroke="#222" stroke-width="1.2" stroke-linejoin="round"/></svg>
<div class="t" style="left:280px;top:32px;font-weight:bold;font-size:11.5px">F</div>
<svg class="a" style="left:302px;top:24px" width="24" height="24" viewBox="0 0 24 24"><defs><linearGradient id="ig" x1="0" y1="0" x2="0" y2="1"><stop offset="0" stop-color="#b8d4f8"/><stop offset=".45" stop-color="#4a90e4"/><stop offset=".6" stop-color="#1f78e0"/><stop offset="1" stop-color="#7cc8fa"/></linearGradient></defs><circle cx="12" cy="11.8" r="10" fill="url(#ig)" stroke="#1c4c94" stroke-width="1.1"/><rect x="10.3" y="5.6" width="3.4" height="10.8" rx=".6" fill="#f4f8ff" stroke="#2a5aa0" stroke-width=".5"/></svg>
<svg class="a" style="left:343px;top:27px" width="20" height="20" viewBox="0 0 20 20"><path d="M7.3 18.3H14.7V15L17.4 7.6L16.3 5.6L15 6.2L14.2 3.6L12.6 3.4L12 5.5L11.3 2.2H9.3L8.9 5.5L8.2 3.2L5.8 3.6L6.8 10L4.6 8.6L2.4 9.8z" fill="#fff" stroke="#000" stroke-width="1.5" stroke-linejoin="round"/><path d="M8.9 5.5L9.2 10.2M12 5.5L12.2 10.2M15 6.2L14.6 10.8" stroke="#000" stroke-width="1.2"/></svg>
<svg class="a" style="left:368px;top:22px" width="28" height="28" viewBox="0 0 28 28"><path d="M16.6 9.2L8 17.8" stroke="#2a2a2a" stroke-width="3.6"/><path d="M16.2 9.6L8.2 17.6" stroke="#f2f2f4" stroke-width="1.5"/><path d="M14.8 7.9L18.1 11.2" stroke="#151515" stroke-width="2.4"/><circle cx="19" cy="6.1" r="2.5" fill="#2a2418"/><circle cx="18.4" cy="5.4" r=".8" fill="#d8d8d0"/><path d="M8 17.8Q6.6 19.6 6.5 21.8" stroke="#555" stroke-width="1.6" fill="none"/><path d="M6.6 21.9Q5.6 22.4 4.6 21.3" stroke="#8a8a8a" stroke-width="1.3" fill="none"/></svg>
<svg class="a" style="left:403px;top:27px" width="18" height="18" viewBox="0 0 18 18"><rect x="1.5" y="1.5" width="15" height="15" fill="none" stroke="#111" stroke-width="1.5" stroke-dasharray="3.5 3" stroke-dashoffset="1.8"/></svg>
<svg class="a" style="left:434px;top:27px" width="17" height="17" viewBox="0 0 17 17"><path d="M1 13L13 1" stroke="#8b1010" stroke-width="2.2"/><path d="M1 15.5h14" stroke="#1a7a1a" stroke-width="2.2"/><circle cx="9" cy="9.5" r="1.1" fill="#102060"/><path d="M9 5.5q4 0 5 5" fill="none" stroke="#102080" stroke-width="1.3"/><path d="M12 9.5l2 2.5 2-2.5" fill="none" stroke="#102080" stroke-width="1.3"/></svg>
<svg class="a" style="left:644px;top:28px" width="15" height="15" viewBox="0 0 15 15"><path d="M13.5 1.5h-6q-3 0-3 3v3.5H1.5l4.5 5.5 4.5-5.5H7.5V5.5q0-1 1-1h5z" fill="#b7c7d8" stroke="#111" stroke-width="1.1" stroke-linejoin="round"/></svg>
<svg class="a" style="left:667px;top:28px" width="15" height="15" viewBox="0 0 15 15"><path d="M1.5 1.5h6q3 0 3 3v3.5h3l-4.5 5.5-4.5-5.5h3V5.5q0-1-1-1h-5z" fill="#b7c7d8" stroke="#111" stroke-width="1.1" stroke-linejoin="round"/></svg>
<svg class="a" style="left:691px;top:29px" width="16" height="13" viewBox="0 0 16 13"><path d="M1 6.5l4.5-5v3h5v-3l4.5 5-4.5 5v-3h-5v3z" fill="#b7c7d8" stroke="#111" stroke-width="1.1" stroke-linejoin="round"/></svg>
<svg class="a" style="left:716px;top:28px" width="13" height="16" viewBox="0 0 13 16"><path d="M6.5 1l5 4.5h-3v5h3l-5 4.5-5-4.5h3v-5h-3z" fill="#b7c7d8" stroke="#111" stroke-width="1.1" stroke-linejoin="round"/></svg>
<div class="a" style="left:212px;top:53px;width:505px;height:505px;border:1px solid #8c8c8c;border-right-color:#a8a8a8;border-bottom-color:#a8a8a8;border-radius:2px;background:#efefef"></div>
<svg class="a" style="left:213px;top:89px" width="503" height="433" viewBox="0 0 503 433"><use href="#photo"/></svg>
<div class="trk" style="left:718px;top:54px;width:15px;height:504px"></div><div class="sbv" style="left:718px;top:54px;width:15px;height:14px"></div><div class="tu" style="left:721px;top:59px;border-width:0 4.5px 5px 4.5px"></div><div class="sbv" style="left:718px;top:68px;width:15px;height:460px"></div><div class="sbv" style="left:718px;top:528px;width:15px;height:15px"></div><div class="tu" style="left:721px;top:533px;border-width:0 4.5px 5px 4.5px"></div><div class="sbv" style="left:718px;top:543px;width:15px;height:15px"></div><div class="td" style="left:721px;top:548px;border-width:5px 4.5px 0 4.5px"></div>
<div class="trk" style="left:212px;top:559px;width:505px;height:15px"></div><div class="sbh" style="left:212px;top:559px;width:15px;height:15px"></div><div class="tl" style="left:216px;top:562px;border-width:4.5px 5px 4.5px 0"></div><div class="sbh" style="left:227px;top:558px;width:403px;height:16px"></div><div class="sbh" style="left:685px;top:559px;width:16px;height:15px"></div><div class="tl" style="left:690px;top:562px;border-width:4.5px 5px 4.5px 0"></div><div class="sbh" style="left:701px;top:559px;width:16px;height:15px"></div><div class="tr" style="left:707px;top:562px;border-width:4.5px 0 4.5px 5px"></div>
<div class="a" style="left:418px;top:561px;width:2px;height:2px;background:#b8b8bc;border-right:1px solid #fff"></div><div class="a" style="left:418px;top:564px;width:2px;height:2px;background:#b8b8bc;border-right:1px solid #fff"></div><div class="a" style="left:418px;top:567px;width:2px;height:2px;background:#b8b8bc;border-right:1px solid #fff"></div><div class="a" style="left:422px;top:561px;width:2px;height:2px;background:#b8b8bc;border-right:1px solid #fff"></div><div class="a" style="left:422px;top:564px;width:2px;height:2px;background:#b8b8bc;border-right:1px solid #fff"></div><div class="a" style="left:422px;top:567px;width:2px;height:2px;background:#b8b8bc;border-right:1px solid #fff"></div><div class="a" style="left:426px;top:561px;width:2px;height:2px;background:#b8b8bc;border-right:1px solid #fff"></div><div class="a" style="left:426px;top:564px;width:2px;height:2px;background:#b8b8bc;border-right:1px solid #fff"></div><div class="a" style="left:426px;top:567px;width:2px;height:2px;background:#b8b8bc;border-right:1px solid #fff"></div><div class="a" style="left:430px;top:561px;width:2px;height:2px;background:#b8b8bc;border-right:1px solid #fff"></div><div class="a" style="left:430px;top:564px;width:2px;height:2px;background:#b8b8bc;border-right:1px solid #fff"></div><div class="a" style="left:430px;top:567px;width:2px;height:2px;background:#b8b8bc;border-right:1px solid #fff"></div><div class="a" style="left:434px;top:561px;width:2px;height:2px;background:#b8b8bc;border-right:1px solid #fff"></div><div class="a" style="left:434px;top:564px;width:2px;height:2px;background:#b8b8bc;border-right:1px solid #fff"></div><div class="a" style="left:434px;top:567px;width:2px;height:2px;background:#b8b8bc;border-right:1px solid #fff"></div>
<div class="t" style="left:214px;top:587px;font-weight:bold;font-size:11px;letter-spacing:0.35px">Preview:</div>
<div class="t" style="left:267px;top:587px;letter-spacing:-0.3px">Scale:</div>
<div class="btn" style="left:305px;top:580px;width:50px;height:24px"></div>
<div class="a" style="left:335px;top:583px;width:2px;height:18px;border-left:1px solid #c2c2c2;border-right:1px solid #fbfbfb"></div>
<div class="td" style="left:339px;top:590px;border-width:5px 4.5px 0 4.5px"></div>
<div class="t" style="left:310px;top:587px">1:4</div>
<svg class="a" style="left:362px;top:583px" width="18" height="18" viewBox="0 0 18 18"><path d="M10.5 10.5l5.5 5.5" stroke="#c87818" stroke-width="3" stroke-linecap="round"/><path d="M10.5 10.5l5 5" stroke="#f0b050" stroke-width="1.2" stroke-linecap="round"/><circle cx="7" cy="7" r="5.5" fill="#e8eef0" stroke="#8a9aa0" stroke-width="1.3"/><circle cx="6" cy="5.5" r="2.5" fill="#fff" opacity=".8"/><rect x="1" y="14" width="5" height="2.4" rx=".5" fill="#3ca836"/></svg>
<svg class="a" style="left:386px;top:583px" width="18" height="18" viewBox="0 0 18 18"><path d="M10.5 10.5l5.5 5.5" stroke="#c87818" stroke-width="3" stroke-linecap="round"/><path d="M10.5 10.5l5 5" stroke="#f0b050" stroke-width="1.2" stroke-linecap="round"/><circle cx="7" cy="7" r="5.5" fill="#e8eef0" stroke="#8a9aa0" stroke-width="1.3"/><circle cx="6" cy="5.5" r="2.5" fill="#fff" opacity=".8"/><path d="M3.5 12v6M0.5 15h6" stroke="#3ca836" stroke-width="2"/></svg>
<svg class="a" style="left:410px;top:583px" width="18" height="18" viewBox="0 0 18 18"><path d="M10.5 10.5l5.5 5.5" stroke="#c87818" stroke-width="3" stroke-linecap="round"/><path d="M10.5 10.5l5 5" stroke="#f0b050" stroke-width="1.2" stroke-linecap="round"/><circle cx="7" cy="7" r="5.5" fill="#e8eef0" stroke="#8a9aa0" stroke-width="1.3"/><circle cx="6" cy="5.5" r="2.5" fill="#fff" opacity=".8"/><path d="M1 13.5h1.6M1 16.5h1.6M4.5 13.5h1.6M4.5 16.5h1.6" stroke="#3a7a36" stroke-width="1.6"/></svg>
<div class="t" style="left:435px;top:587px">(100%)</div>
<div class="vsep" style="left:496px;top:580px;height:23px"></div>
<div class="t" style="left:507px;top:587px;font-weight:bold;font-size:11px;letter-spacing:0.2px">Crop:</div>
<div class="a" style="left:549px;top:586px;width:13px;height:13px;border:1px solid #8a8a8a;border-radius:2px;background:linear-gradient(#f6f6f6,#e8e8e8)"></div>
<svg class="a" style="left:572px;top:583px" width="18" height="18" viewBox="0 0 18 18"><path d="M10.5 10.5l5.5 5.5" stroke="#c87818" stroke-width="3" stroke-linecap="round"/><path d="M10.5 10.5l5 5" stroke="#f0b050" stroke-width="1.2" stroke-linecap="round"/><circle cx="7" cy="7" r="5.5" fill="#e8eef0" stroke="#8a9aa0" stroke-width="1.3"/><circle cx="6" cy="5.5" r="2.5" fill="#fff" opacity=".8"/><rect x="1" y="14" width="5" height="2.4" rx=".5" fill="#3ca836"/></svg>
<svg class="a" style="left:596px;top:583px" width="18" height="18" viewBox="0 0 18 18"><path d="M10.5 10.5l5.5 5.5" stroke="#c87818" stroke-width="3" stroke-linecap="round"/><path d="M10.5 10.5l5 5" stroke="#f0b050" stroke-width="1.2" stroke-linecap="round"/><circle cx="7" cy="7" r="5.5" fill="#e8eef0" stroke="#8a9aa0" stroke-width="1.3"/><circle cx="6" cy="5.5" r="2.5" fill="#fff" opacity=".8"/><path d="M3.5 12v6M0.5 15h6" stroke="#3ca836" stroke-width="2"/></svg>
<svg class="a" style="left:624px;top:583px" width="18" height="18" viewBox="0 0 18 18"><path d="M10.5 10.5l5.5 5.5" stroke="#c87818" stroke-width="3" stroke-linecap="round"/><path d="M10.5 10.5l5 5" stroke="#f0b050" stroke-width="1.2" stroke-linecap="round"/><circle cx="7" cy="7" r="5.5" fill="#e8eef0" stroke="#8a9aa0" stroke-width="1.3"/><circle cx="6" cy="5.5" r="2.5" fill="#fff" opacity=".8"/><path d="M1.5 13v5M5.5 13v5M1.5 15.5h4" stroke="#3ca836" stroke-width="1.6"/></svg>
<div class="btn" style="left:649px;top:580px;width:73px;height:24px"></div>
<div class="a" style="left:701px;top:583px;width:2px;height:18px;border-left:1px solid #c2c2c2;border-right:1px solid #fbfbfb"></div>
<div class="td" style="left:707px;top:590px;border-width:5px 4.5px 0 4.5px"></div>
<div class="t" style="left:654px;top:587px">Huge</div>
<div class="a" style="left:212px;top:617px;width:505px;height:225px;border:1px solid #8c8c8c;border-right:none;border-bottom:none;border-radius:2px 0 0 0;background:#fff;overflow:hidden">
<div class="a" style="left:366px;top:0;width:121px;height:124px;background:#0277e1"></div>
<div class="thumb" style="left:8px;top:12px;border-color:#000"><svg width="107" height="80" viewBox="0 0 107 80" preserveAspectRatio="none"><use href="#t1"/></svg></div>
<div class="thumb" style="left:130px;top:12px;border-color:#000"><svg width="107" height="80" viewBox="0 0 107 80" preserveAspectRatio="none"><use href="#t2"/></svg></div>
<div class="thumb" style="left:252px;top:12px;border-color:#000"><svg width="107" height="80" viewBox="0 0 107 80" preserveAspectRatio="none"><use href="#t3"/></svg></div>
<div class="thumb" style="left:374px;top:12px;border-color:#fff"><svg width="107" height="80" viewBox="0 0 107 80" preserveAspectRatio="none"><use href="#t4"/></svg></div>
<div class="thumb" style="left:496px;top:12px;border-color:#000"><svg width="107" height="80" viewBox="0 0 107 80" preserveAspectRatio="none"><use href="#t5"/></svg></div>
<div class="thumb" style="left:8px;top:136px;border-color:#000"><svg width="107" height="80" viewBox="0 0 107 80" preserveAspectRatio="none"><use href="#t6"/></svg></div>
<div class="thumb" style="left:130px;top:136px;border-color:#000"><svg width="107" height="80" viewBox="0 0 107 80" preserveAspectRatio="none"><use href="#t7"/></svg></div>
<div class="thumb" style="left:252px;top:136px;border-color:#000"><svg width="107" height="80" viewBox="0 0 107 80" preserveAspectRatio="none"><use href="#t8"/></svg></div>
<div class="thumb" style="left:374px;top:136px;border-color:#000"><svg width="107" height="80" viewBox="0 0 107 80" preserveAspectRatio="none"><use href="#t9"/></svg></div>
<div class="thumb" style="left:496px;top:136px;border-color:#000"><svg width="107" height="80" viewBox="0 0 107 80" preserveAspectRatio="none"><use href="#t5"/></svg></div>
<div class="lbl" style="left:2px;top:101px">dscf1650.jpg</div>
<div class="lbl" style="left:124px;top:101px">dscf1652.jpg</div>
<div class="lbl" style="left:246px;top:101px">dscf1654.jpg</div>
<div class="lbl" style="left:366px;top:101px;font-style:normal;color:#fff">dscf1656.raf</div>
</div>
<div class="trk" style="left:719px;top:617px;width:15px;height:225px"></div><div class="sbv" style="left:719px;top:617px;width:15px;height:14px"></div><div class="tu" style="left:722px;top:622px;border-width:0 4.5px 5px 4.5px"></div><div class="sbv" style="left:719px;top:632px;width:15px;height:161px"></div><div class="sbv" style="left:719px;top:812px;width:15px;height:15px"></div><div class="tu" style="left:722px;top:817px;border-width:0 4.5px 5px 4.5px"></div><div class="sbv" style="left:719px;top:827px;width:15px;height:15px"></div><div class="td" style="left:722px;top:832px;border-width:5px 4.5px 0 4.5px"></div>
<div class="a" style="left:723px;top:704px;width:2px;height:2px;background:#b8b8bc;border-right:1px solid #fff"></div><div class="a" style="left:723px;top:708px;width:2px;height:2px;background:#b8b8bc;border-right:1px solid #fff"></div><div class="a" style="left:723px;top:712px;width:2px;height:2px;background:#b8b8bc;border-right:1px solid #fff"></div><div class="a" style="left:723px;top:716px;width:2px;height:2px;background:#b8b8bc;border-right:1px solid #fff"></div><div class="a" style="left:723px;top:720px;width:2px;height:2px;background:#b8b8bc;border-right:1px solid #fff"></div><div class="a" style="left:727px;top:704px;width:2px;height:2px;background:#b8b8bc;border-right:1px solid #fff"></div><div class="a" style="left:727px;top:708px;width:2px;height:2px;background:#b8b8bc;border-right:1px solid #fff"></div><div class="a" style="left:727px;top:712px;width:2px;height:2px;background:#b8b8bc;border-right:1px solid #fff"></div><div class="a" style="left:727px;top:716px;width:2px;height:2px;background:#b8b8bc;border-right:1px solid #fff"></div><div class="a" style="left:727px;top:720px;width:2px;height:2px;background:#b8b8bc;border-right:1px solid #fff"></div><div class="a" style="left:731px;top:704px;width:2px;height:2px;background:#b8b8bc;border-right:1px solid #fff"></div><div class="a" style="left:731px;top:708px;width:2px;height:2px;background:#b8b8bc;border-right:1px solid #fff"></div><div class="a" style="left:731px;top:712px;width:2px;height:2px;background:#b8b8bc;border-right:1px solid #fff"></div><div class="a" style="left:731px;top:716px;width:2px;height:2px;background:#b8b8bc;border-right:1px solid #fff"></div><div class="a" style="left:731px;top:720px;width:2px;height:2px;background:#b8b8bc;border-right:1px solid #fff"></div>
<div class="a" style="left:716px;top:617px;width:2px;height:225px;background:#efefef"></div>
<div class="trk" style="left:212px;top:845px;width:505px;height:15px"></div><div class="sbh" style="left:212px;top:845px;width:15px;height:15px"></div><div class="tl" style="left:216px;top:848px;border-width:4.5px 5px 4.5px 0"></div><div class="sbh" style="left:227px;top:844px;width:56px;height:16px"></div><div class="sbh" style="left:685px;top:845px;width:16px;height:15px"></div><div class="tl" style="left:690px;top:848px;border-width:4.5px 5px 4.5px 0"></div><div class="sbh" style="left:701px;top:845px;width:16px;height:15px"></div><div class="tr" style="left:707px;top:848px;border-width:4.5px 0 4.5px 5px"></div>
<div class="a" style="left:243px;top:847px;width:2px;height:2px;background:#b8b8bc;border-right:1px solid #fff"></div><div class="a" style="left:243px;top:850px;width:2px;height:2px;background:#b8b8bc;border-right:1px solid #fff"></div><div class="a" style="left:243px;top:853px;width:2px;height:2px;background:#b8b8bc;border-right:1px solid #fff"></div><div class="a" style="left:247px;top:847px;width:2px;height:2px;background:#b8b8bc;border-right:1px solid #fff"></div><div class="a" style="left:247px;top:850px;width:2px;height:2px;background:#b8b8bc;border-right:1px solid #fff"></div><div class="a" style="left:247px;top:853px;width:2px;height:2px;background:#b8b8bc;border-right:1px solid #fff"></div><div class="a" style="left:251px;top:847px;width:2px;height:2px;background:#b8b8bc;border-right:1px solid #fff"></div><div class="a" style="left:251px;top:850px;width:2px;height:2px;background:#b8b8bc;border-right:1px solid #fff"></div><div class="a" style="left:251px;top:853px;width:2px;height:2px;background:#b8b8bc;border-right:1px solid #fff"></div><div class="a" style="left:255px;top:847px;width:2px;height:2px;background:#b8b8bc;border-right:1px solid #fff"></div><div class="a" style="left:255px;top:850px;width:2px;height:2px;background:#b8b8bc;border-right:1px solid #fff"></div><div class="a" style="left:255px;top:853px;width:2px;height:2px;background:#b8b8bc;border-right:1px solid #fff"></div><div class="a" style="left:259px;top:847px;width:2px;height:2px;background:#b8b8bc;border-right:1px solid #fff"></div><div class="a" style="left:259px;top:850px;width:2px;height:2px;background:#b8b8bc;border-right:1px solid #fff"></div><div class="a" style="left:259px;top:853px;width:2px;height:2px;background:#b8b8bc;border-right:1px solid #fff"></div>
<div class="a" style="left:739px;top:193px;width:2px;height:516px;background:repeating-linear-gradient(#efefef 0,#efefef 3px,#a9a9a9 3px,#a9a9a9 4px,#ffffff 4px,#ffffff 5px)"></div>
<div class="a" style="left:207px;top:662px;width:2px;height:150px;background:repeating-linear-gradient(#efefef 0,#efefef 3px,#a9a9a9 3px,#a9a9a9 4px,#ffffff 4px,#ffffff 5px)"></div>
<div class="a" style="left:803px;top:38px;width:251px;height:135px;border:1px solid #8a8a8a;background:#fff"></div>
<svg class="a" style="left:803px;top:38px" width="251" height="135" viewBox="0 0 251 135">
<polygon points="0.0,134.0 1.2,133.3 2.4,132.6 3.6,131.4 4.8,130.4 6.0,130.3 7.2,129.1 8.4,128.2 9.6,128.2 10.8,128.5 12.0,127.6 13.2,126.6 14.4,124.6 15.6,124.3 16.8,122.8 18.0,121.7 19.2,120.6 20.5,119.9 21.7,120.4 22.9,119.3 24.1,118.3 25.3,117.3 26.5,115.2 27.8,112.3 29.1,109.7 30.4,106.8 31.7,103.9 33.0,100.8 34.3,95.5 35.7,92.8 37.0,89.2 38.4,85.2 39.7,80.9 40.9,78.2 42.1,74.2 43.4,72.6 44.6,69.2 45.8,65.3 47.0,61.6 48.5,58.5 49.9,53.5 51.3,49.8 52.8,45.4 54.1,42.5 55.4,40.0 56.7,38.1 58.1,35.5 59.4,32.7 60.7,30.8 62.0,29.5 63.2,29.3 64.5,30.5 65.8,33.0 67.0,33.6 68.4,35.9 69.9,37.5 71.3,39.1 72.6,43.5 73.9,44.9 75.2,48.4 76.6,51.1 77.9,55.0 79.2,57.4 80.6,57.2 81.9,57.6 83.3,56.4 84.6,56.5 86.0,56.8 87.3,55.0 88.5,54.8 89.8,55.0 91.0,55.9 92.3,55.4 93.6,54.7 94.9,54.9 96.3,54.6 97.6,55.1 98.9,54.3 100.2,55.6 101.6,56.0 102.9,56.1 104.2,55.0 105.5,54.8 106.8,52.3 108.2,52.2 109.5,52.9 110.8,51.9 112.4,54.0 114.0,57.9 115.6,60.1 117.1,63.4 118.7,65.3 120.1,68.8 121.6,73.1 123.0,76.3 124.2,79.8 125.5,83.9 126.7,85.7 128.0,88.0 129.2,91.1 130.5,94.0 131.8,97.8 133.1,99.6 134.5,102.1 135.8,104.4 137.1,108.8 138.4,110.3 139.7,112.5 141.0,114.4 142.4,116.6 143.7,119.0 145.0,122.3 146.4,123.4 147.7,125.4 149.0,126.9 150.3,127.1 151.6,129.3 153.0,128.2 154.3,129.7 155.6,130.8 156.9,130.8 158.2,132.6 159.5,131.8 160.8,132.1 162.2,132.3 163.5,132.6 164.8,132.8 166.1,133.0 167.4,133.3 168.8,133.5 170.1,133.8 171.4,134.0 171.4,134" fill="#d2d2d2" stroke="#7a7a7a" stroke-width="1"/>
<path d="M83.5 1V134M167.5 1V134M1 45.5H250M1 90.5H250" stroke="#555" stroke-width="1" stroke-dasharray="4 3"/>
<polyline points="0.0,134.0 1.5,115.0 3.2,104.9 5.0,92.7 6.4,86.8 7.9,82.8 9.3,78.1 10.7,74.0 12.0,72.4 13.3,68.6 14.7,67.5 16.1,68.7 17.6,66.8 19.0,66.7 20.2,64.0 21.5,64.4 22.7,64.3 23.9,62.3 26.0,59.2 27.5,55.0 29.0,48.8 30.3,43.4 31.7,39.4 33.0,35.1 34.4,28.4 35.7,22.8 37.0,18.0 38.4,11.8 39.6,10.6 40.8,9.5 42.0,8.0 43.2,5.8 44.5,4.3 45.8,2.8 47.0,1.9 48.5,3.4 50.0,4.6 51.5,8.7 53.2,12.5 55.0,17.4 56.5,20.7 58.0,27.3 59.3,33.9 60.7,39.0 62.0,46.6 63.3,54.7 64.7,61.8 66.0,69.5 67.3,70.3 68.6,73.5 70.0,75.2 71.3,76.4 72.6,79.2 73.9,80.5 75.2,80.9 76.6,80.5 77.9,81.2 79.2,80.3 80.5,80.4 81.8,81.4 83.1,80.0 84.4,79.0 85.7,79.5 87.0,79.5 88.3,80.1 89.7,80.0 91.0,80.8 92.3,81.7 93.7,83.1 95.0,83.1 96.3,84.7 97.7,87.0 99.0,87.8 100.3,90.6 101.6,95.1 102.9,98.6 104.3,101.1 105.6,104.2 107.0,107.1 108.3,110.6 109.5,114.5 110.8,116.5 112.0,117.1 113.3,119.2 114.5,118.8 115.8,120.8 117.0,123.2 118.4,123.1 119.8,123.6 121.2,124.0 122.6,125.6 124.0,127.5 125.3,125.5 126.6,128.0 127.9,128.5 129.2,129.2 130.5,129.3 131.8,129.9 133.1,129.6 134.4,130.2 135.7,130.3 137.0,129.8 138.3,132.3 139.7,131.8 141.0,131.2 142.3,132.3 143.7,132.6 145.0,132.9 146.2,133.0 147.5,133.0 148.7,133.1 150.0,133.1 151.2,133.2 152.4,133.2 153.7,133.3 154.9,133.3 156.1,133.4 157.4,133.4 158.6,133.5 159.9,133.5 161.1,133.6 162.3,133.6 163.6,133.7 164.8,133.7 166.0,133.8 167.3,133.8 168.5,133.9 169.8,133.9 171.0,134.0 172.2,134.0 173.4,134.0 174.6,134.0 175.9,134.0 177.1,134.0 178.3,134.0 179.5,134.0 180.7,134.0 181.9,134.0 183.2,134.0 184.4,134.0 185.6,134.0 186.8,134.0 188.0,134.0 189.2,134.0 190.4,134.0 191.7,134.0 192.9,134.0 194.1,134.0 195.3,134.0 196.5,134.0 197.7,134.0 199.0,134.0 200.2,134.0 201.4,134.0 202.6,134.0 203.8,134.0 205.0,134.0 206.2,134.0 207.5,134.0 208.7,134.0 209.9,134.0 211.1,134.0 212.3,134.0 213.5,134.0 214.8,134.0 216.0,134.0 217.2,134.0 218.4,134.0 219.6,134.0 220.8,134.0 222.0,134.0 223.3,134.0 224.5,134.0 225.7,134.0 226.9,134.0 228.1,134.0 229.3,134.0 230.6,134.0 231.8,134.0 233.0,134.0 234.2,134.0 235.4,134.0 236.6,134.0 237.8,134.0 239.1,134.0 240.3,134.0 241.5,134.0 242.7,134.0 243.9,134.0 245.1,134.0 246.4,134.0 247.6,134.0 248.8,134.0 250.0,134.0" fill="none" stroke="#1010d0" stroke-width="1.2"/>
<polyline points="0.0,134.0 1.2,132.6 2.4,132.3 3.6,130.9 4.8,127.2 6.0,125.8 7.3,126.4 8.5,124.7 9.7,123.1 10.9,120.7 12.1,120.1 13.3,118.7 14.5,116.3 15.7,112.9 16.9,111.3 18.1,108.9 19.4,107.5 20.6,105.9 21.8,103.5 23.0,100.1 24.3,97.2 25.5,94.1 26.8,90.9 28.0,88.2 29.3,86.7 30.5,83.7 31.8,81.2 33.1,79.1 34.4,74.8 35.7,71.5 37.0,67.3 38.3,63.6 39.6,61.1 41.0,57.5 42.3,55.2 43.9,52.1 45.4,46.9 47.0,41.2 48.2,40.4 49.4,37.5 50.6,34.7 51.8,32.5 53.0,29.5 54.2,27.0 55.5,23.2 56.8,22.2 58.1,19.5 59.4,14.8 60.7,16.7 62.0,16.9 63.4,16.6 64.7,17.1 66.4,19.5 68.0,23.1 69.6,25.5 71.3,29.8 72.5,32.9 73.8,38.6 75.0,43.0 76.4,46.3 77.8,51.0 79.2,56.3 80.5,59.1 81.8,61.8 83.1,64.4 84.4,67.9 85.7,70.2 87.0,70.2 88.3,73.4 89.7,73.1 91.0,76.1 92.3,75.8 93.6,77.9 94.9,77.7 96.2,77.6 97.6,78.1 98.9,78.9 100.2,79.1 101.5,79.7 102.8,80.8 104.2,82.9 105.5,85.3 106.8,85.8 108.1,85.7 109.3,89.7 110.5,91.5 111.8,94.0 113.0,94.2 114.4,98.2 115.9,99.0 117.3,103.0 118.7,104.6 120.1,107.1 121.6,111.4 123.0,112.0 124.2,114.7 125.5,117.1 126.7,117.1 128.0,118.6 129.2,122.0 130.5,121.8 131.8,123.6 133.1,122.8 134.4,124.6 135.7,125.1 137.0,127.4 138.3,126.5 139.7,129.3 141.0,127.4 142.3,129.8 143.7,128.5 145.0,129.7 146.2,131.2 147.5,129.5 148.7,129.6 149.9,131.0 151.2,130.2 152.4,129.4 153.6,131.9 154.9,129.7 156.1,129.5 157.4,130.3 158.6,131.1 159.8,131.4 161.1,129.8 162.3,130.5 163.5,129.7 164.8,130.8 166.0,131.7 167.3,131.5 168.5,131.9 169.8,131.4 171.0,131.6 172.3,131.1 173.5,130.4 174.8,129.6 176.1,130.7 177.3,129.7 178.6,129.0 179.8,129.8 181.1,130.8 182.3,128.8 183.6,129.9 184.9,129.3 186.1,129.5 187.4,128.5 188.6,130.5 189.9,128.6 191.1,129.4 192.4,128.8 193.6,127.2 194.8,128.2 196.0,126.6 197.2,125.8 198.4,125.3 199.6,125.1 200.8,124.4 202.0,125.4 203.3,124.3 204.6,124.8 205.8,123.9 207.1,123.4 208.4,120.6 209.7,120.5 210.9,119.2 212.2,119.4 213.5,118.7 214.9,118.1 216.2,116.7 217.6,114.5 219.0,113.8 220.3,113.4 221.5,111.3 222.8,110.7 224.0,111.0 225.3,109.5 226.6,113.7 228.0,115.1 229.3,117.4 230.5,120.4 231.8,123.4 233.0,126.3 234.5,130.0 235.9,132.9 237.2,133.0 238.5,133.1 239.7,133.2 241.0,133.3 242.3,133.4 243.6,133.5 244.9,133.6 246.2,133.7 247.4,133.8 248.7,133.9 250.0,134.0" fill="none" stroke="#e01010" stroke-width="1.2"/>
<polyline points="0.0,134.0 1.3,133.3 2.6,132.6 3.9,131.2 5.1,131.3 6.4,130.1 7.7,130.0 9.0,129.3 10.2,126.9 11.4,125.7 12.6,126.9 13.8,124.4 15.0,123.3 16.2,124.3 17.4,121.9 18.6,121.9 20.0,118.3 21.4,116.0 22.8,112.1 24.2,110.7 25.6,108.6 27.0,105.1 28.2,103.0 29.5,100.2 30.7,96.1 31.9,95.3 33.2,92.2 34.4,88.9 35.7,83.6 36.9,81.2 38.2,75.6 39.5,71.7 40.7,67.6 42.0,62.6 43.4,58.9 44.7,53.3 46.1,50.2 47.5,45.1 48.8,42.1 50.2,37.8 51.8,30.2 53.4,24.7 55.0,19.3 56.5,17.1 58.1,11.6 59.4,12.9 60.7,12.7 62.0,14.0 63.3,14.7 64.7,15.6 66.0,17.2 67.3,22.2 68.7,28.1 70.0,32.5 71.3,39.1 72.6,44.9 73.9,51.3 75.2,51.7 76.5,51.7 77.9,54.8 79.2,56.4 80.5,53.5 81.7,49.9 83.0,47.6 84.2,43.7 85.4,42.8 86.6,39.6 88.1,40.4 89.5,41.3 91.0,44.9 92.3,46.4 93.7,45.1 95.0,48.1 96.3,48.4 97.6,49.0 99.0,50.7 100.3,53.3 101.6,54.9 102.9,54.0 104.2,58.1 105.5,59.3 106.8,63.7 108.2,65.3 109.5,69.4 110.8,72.2 112.2,75.3 113.6,81.0 115.0,83.5 116.2,87.3 117.5,93.1 118.7,96.1 120.0,99.6 121.3,103.2 122.7,106.8 124.0,108.7 125.3,111.5 126.6,116.8 127.9,116.2 129.2,118.7 130.4,119.4 131.7,118.8 133.0,119.9 134.3,120.8 135.7,121.9 137.0,122.5 138.4,123.1 139.7,124.0 140.9,125.4 142.1,124.8 143.4,125.2 144.6,126.5 145.8,125.8 147.0,126.6 148.3,128.9 149.5,128.2 150.7,128.9 151.9,128.0 153.2,129.7 154.4,130.6 155.6,129.8 156.8,131.4 158.0,131.6 159.2,130.3 160.5,131.9 161.7,131.6 162.9,132.3 164.1,132.0 165.3,132.2 166.5,132.3 167.8,132.5 169.0,132.6 170.2,132.8 171.4,132.9 172.6,132.9 173.8,132.9 175.0,133.0 176.2,133.0 177.4,133.0 178.7,133.0 179.9,133.0 181.1,133.0 182.3,133.1 183.5,133.1 184.7,133.1 185.9,133.1 187.1,133.1 188.3,133.1 189.5,133.2 190.7,133.2 192.0,133.2 193.2,133.2 194.4,133.2 195.6,133.2 196.8,133.3 198.0,133.3 199.2,133.3 200.4,133.3 201.6,133.3 202.8,133.3 204.0,133.4 205.3,133.4 206.5,133.4 207.7,133.4 208.9,133.4 210.1,133.4 211.3,133.5 212.5,133.5 213.7,133.5 214.9,133.5 216.1,133.5 217.4,133.5 218.6,133.6 219.8,133.6 221.0,133.6 222.2,133.6 223.4,133.6 224.6,133.6 225.8,133.7 227.0,133.7 228.2,133.7 229.4,133.7 230.7,133.7 231.9,133.7 233.1,133.8 234.3,133.8 235.5,133.8 236.7,133.8 237.9,133.8 239.1,133.8 240.3,133.9 241.5,133.9 242.7,133.9 244.0,133.9 245.2,133.9 246.4,133.9 247.6,134.0 248.8,134.0 250.0,134.0" fill="none" stroke="#10e010" stroke-width="1.2"/>
<rect x=".5" y=".5" width="250" height="134" fill="none" stroke="#8a8a8a"/>
</svg>
<div style="position:absolute;border:1px solid #8e8e8e;border-radius:3px;background:linear-gradient(#cfcfd2,#bdbdc2);left:1056px;top:40px;width:15px;height:22px"></div>
<div class="t" style="left:1056px;top:46px;width:15px;text-align:center">R</div>
<div style="position:absolute;border:1px solid #8e8e8e;border-radius:3px;background:linear-gradient(#cfcfd2,#bdbdc2);left:1056px;top:66px;width:15px;height:22px"></div>
<div class="t" style="left:1056px;top:72px;width:15px;text-align:center">G</div>
<div style="position:absolute;border:1px solid #8e8e8e;border-radius:3px;background:linear-gradient(#cfcfd2,#bdbdc2);left:1056px;top:92px;width:15px;height:22px"></div>
<div class="t" style="left:1056px;top:98px;width:15px;text-align:center">B</div>
<div style="position:absolute;border:1px solid #8e8e8e;border-radius:3px;background:linear-gradient(#cfcfd2,#bdbdc2);left:1056px;top:118px;width:15px;height:22px"></div>
<div class="t" style="left:1056px;top:124px;width:15px;text-align:center">L</div>
<div class="a" style="left:743px;top:201px;width:392px;height:618px;border:1px solid #8a8a8a;border-right:2px solid #888;border-radius:3px;background:#efefef"></div>
<div class="a" style="left:774px;top:183px;width:57px;height:19px;border:1px solid #9a9a9a;border-bottom:none;border-radius:3px 3px 0 0;background:linear-gradient(#e8e8ec,#cfcfd6)"></div>
<div class="a" style="left:743px;top:181px;width:31px;height:22px;border:1px solid #8e8e8e;border-bottom:none;border-radius:3px 3px 0 0;background:#efefef"></div>
<div class="t" style="left:746px;top:185px">Basic</div>
<div class="t" style="left:779px;top:186px;letter-spacing:-0.15px">Transform</div>
<div class="tool" style="top:203px"><svg class="a" style="left:8px;top:7px" width="7" height="10" viewBox="0 0 7 10"><path d="M1 .8l4.8 4.2L1 9.2z" fill="#fff" stroke="#000" stroke-width="1.2"/></svg><div class="t">White Balance</div></div>
<div class="tool" style="top:229px"><svg class="a" style="left:8px;top:7px" width="7" height="10" viewBox="0 0 7 10"><path d="M1 .8l4.8 4.2L1 9.2z" fill="#fff" stroke="#000" stroke-width="1.2"/></svg><div class="t">Exposure</div></div>
<div class="tool" style="top:255px"><svg class="a" style="left:8px;top:7px" width="7" height="10" viewBox="0 0 7 10"><path d="M1 .8l4.8 4.2L1 9.2z" fill="#fff" stroke="#000" stroke-width="1.2"/></svg><div class="t">Highlight Recovery</div></div>
<div class="tool" style="top:281px"><svg class="a" style="left:8px;top:7px" width="7" height="10" viewBox="0 0 7 10"><path d="M1 .8l4.8 4.2L1 9.2z" fill="#fff" stroke="#000" stroke-width="1.2"/></svg><div class="t">Shadows/Highlights</div></div>
<div class="tool" style="top:307px"><svg class="a" style="left:8px;top:7px" width="7" height="10" viewBox="0 0 7 10"><path d="M1 .8l4.8 4.2L1 9.2z" fill="#fff" stroke="#000" stroke-width="1.2"/></svg><div class="t">Sharpening</div></div>
<div class="tool" style="top:333px"><svg class="a" style="left:8px;top:7px" width="7" height="10" viewBox="0 0 7 10"><path d="M1 .8l4.8 4.2L1 9.2z" fill="#fff" stroke="#000" stroke-width="1.2"/></svg><div class="t">Color Boost</div></div>
<div class="tool" style="top:359px"><svg class="a" style="left:8px;top:7px" width="7" height="10" viewBox="0 0 7 10"><path d="M1 .8l4.8 4.2L1 9.2z" fill="#fff" stroke="#000" stroke-width="1.2"/></svg><div class="t">Color Shift</div></div>
<div class="tool" style="top:385px"><svg class="a" style="left:8px;top:7px" width="7" height="10" viewBox="0 0 7 10"><path d="M1 .8l4.8 4.2L1 9.2z" fill="#fff" stroke="#000" stroke-width="1.2"/></svg><div class="t">Luminance Curve</div></div>
<div class="tool" style="top:411px"><svg class="a" style="left:8px;top:7px" width="7" height="10" viewBox="0 0 7 10"><path d="M1 .8l4.8 4.2L1 9.2z" fill="#fff" stroke="#000" stroke-width="1.2"/></svg><div class="t">Luminance Noise Reduction</div></div>
<div class="tool" style="top:437px"><svg class="a" style="left:8px;top:7px" width="7" height="10" viewBox="0 0 7 10"><path d="M1 .8l4.8 4.2L1 9.2z" fill="#fff" stroke="#000" stroke-width="1.2"/></svg><div class="t">Color Noise Reduction</div></div>
<div class="btn" style="left:743px;top:828px;width:359px;height:24px"></div>
<div class="btn" style="left:1102px;top:828px;width:32px;height:24px"></div>
<div class="btn" style="left:743px;top:852px;width:391px;height:25px"></div>
<svg class="a" style="left:878px;top:832px" width="16" height="16" viewBox="0 0 16 16"><defs><linearGradient id="fdv2" x1="0" y1="0" x2="1" y2="1"><stop offset="0" stop-color="#ffffff"/><stop offset=".5" stop-color="#d8d8ea"/><stop offset="1" stop-color="#6a6a8c"/></linearGradient></defs><rect x="1.6" y="1.4" width="12.4" height="13.2" rx=".8" fill="url(#fdv2)" stroke="#14142e" stroke-width="1.2"/><path d="M14 2v12.6H2" stroke="#0a0a20" stroke-width="1.4" fill="none"/><rect x="2.2" y="6.6" width="11.4" height="1.3" fill="#2a2a4a"/><rect x="2.2" y="7.9" width="11.4" height="2" fill="#9a9ab4"/><circle cx="4.4" cy="3.6" r=".9" fill="#20203a"/></svg>
<div class="t" style="left:897px;top:835px;font-weight:bold;font-size:12px;color:#900a0a;letter-spacing:0.3px">Save Image</div>
<div class="t" style="left:1105px;top:835px">As...</div>
<svg class="a" style="left:899px;top:855px" width="18" height="18" viewBox="0 0 18 18"><path d="M7.5 7.5L15 15" stroke="#8a5008" stroke-width="4.6" stroke-linecap="round"/><path d="M7.5 7.5L15 15" stroke="#f4a826" stroke-width="2.8" stroke-linecap="round"/><path d="M3 2.2A4.6 4.6 0 1 0 9.6 5.6L7.2 6.4L5.6 4.8L6.4 2.4A4.6 4.6 0 0 0 3 2.2z" fill="#e4e6ea" stroke="#707680" stroke-width="1"/></svg>
<div class="t" style="left:917px;top:859px">Preferences</div>
</body></html>
